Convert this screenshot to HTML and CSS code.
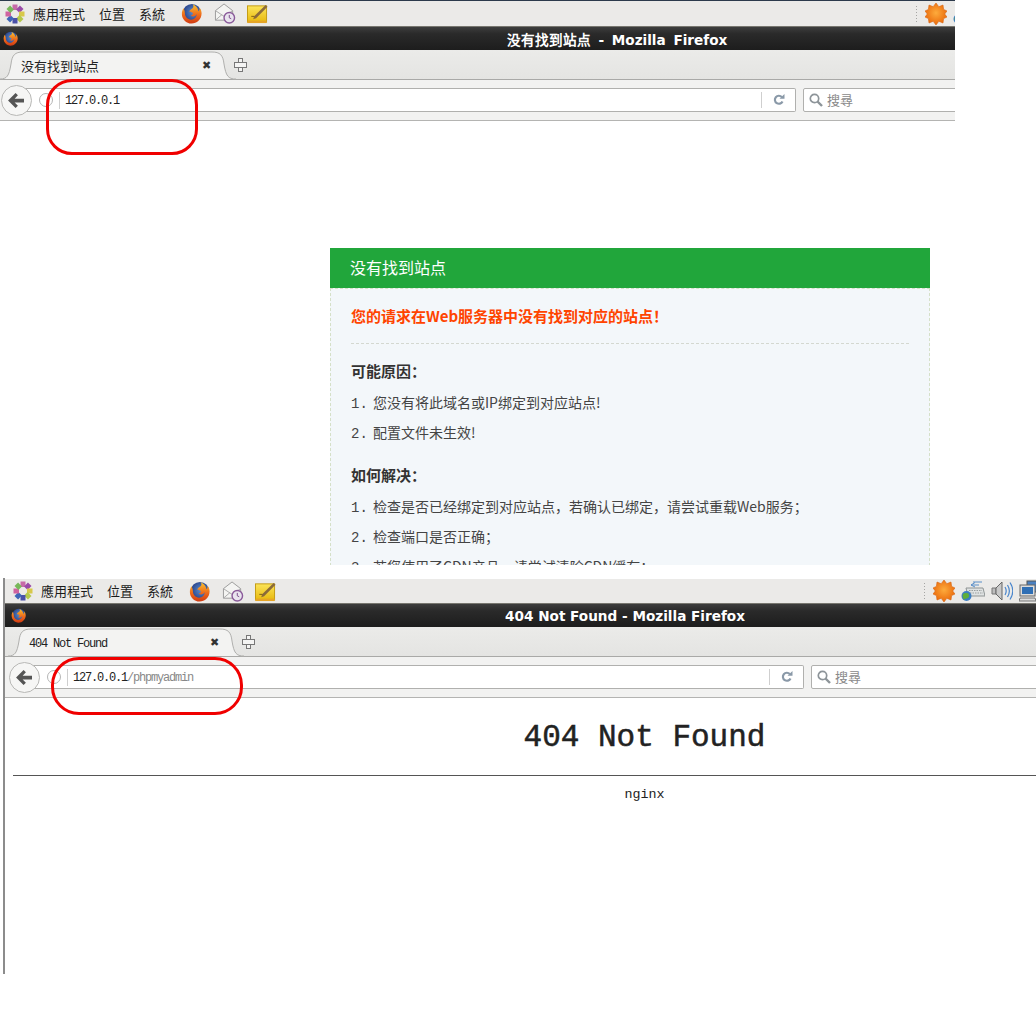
FILE: index.html
```html
<!DOCTYPE html>
<html lang="zh-CN">
<head>
    <meta charset="UTF-8">
    <title>127.0.0.1 / phpmyadmin</title>
    <link rel="stylesheet" href="styles.css">
</head>
<body>
    <svg class="defs" width="0" height="0">
        <defs>
            <radialGradient id="globe" cx="55%" cy="45%" r="60%"><stop offset="0" stop-color="#5b8fd0"/><stop offset="1" stop-color="#23387f"/></radialGradient>
            <linearGradient id="fox" x1="0" y1="0" x2="0" y2="1"><stop offset="0" stop-color="#f9c22e"/><stop offset=".55" stop-color="#ee6a1b"/><stop offset="1" stop-color="#cf3a12"/></linearGradient>
            <linearGradient id="noteFill" x1="0" y1="0" x2="0" y2="1"><stop offset="0" stop-color="#fbe45a"/><stop offset="1" stop-color="#e8b90e"/></linearGradient>
            <radialGradient id="sunFill" cx="50%" cy="45%" r="55%"><stop offset="0" stop-color="#fdab3c"/><stop offset="1" stop-color="#ea6a0c"/></radialGradient>
            <symbol id="i-logo" viewBox="0 0 20 20">
                <rect x="7.500" y="0.500" width="5" height="5.500" fill="#c76aa8"/>
                <rect x="7.500" y="0.500" width="5" height="5.500" fill="#9a4aa8" transform="rotate(45 10 10)"/>
                <rect x="7.500" y="0.500" width="5" height="5.500" fill="#d8c84a" transform="rotate(90 10 10)"/>
                <rect x="7.500" y="0.500" width="5" height="5.500" fill="#b4c84a" transform="rotate(135 10 10)"/>
                <rect x="7.500" y="0.500" width="5" height="5.500" fill="#4a50a8" transform="rotate(180 10 10)"/>
                <rect x="7.500" y="0.500" width="5" height="5.500" fill="#3f66b8" transform="rotate(225 10 10)"/>
                <rect x="7.500" y="0.500" width="5" height="5.500" fill="#cf62a0" transform="rotate(270 10 10)"/>
                <rect x="7.500" y="0.500" width="5" height="5.500" fill="#78b85a" transform="rotate(315 10 10)"/>
                <circle cx="10" cy="10" r="2.400" fill="#eeeae6"/>
            </symbol>
            <symbol id="i-firefox" viewBox="0 0 24 24">
                <circle cx="12.500" cy="11.500" r="10.500" fill="url(#globe)"/>
                <path d="M3 6C1.500 8 1 10 1 12.500 1 18.500 6 23.500 12 23.500S23.500 18.500 23.500 12C23.500 9 22.500 6.500 21 5 21.500 7 21 8.500 20 9.500 19.500 6 17 3 13.500 1.500 15 4 14 5.500 12.500 6.500 11 7.500 9.500 8.500 9.500 10 11 9.800 12.500 10.500 13.500 11.500 14 13 12.500 14 11 14.500 14 16.500 17 15 18 12.500 18 16 15 19 11.500 19 7.500 19 4.500 15.500 4.500 12 4.500 10 4 8 3 6Z" fill="url(#fox)"/>
            </symbol>
            <symbol id="i-mail" viewBox="0 0 22 22">
                <path d="M1 8 10 1l9 7v10H1Z" fill="#f4f4f2" stroke="#9a9a9a"/>
                <path d="M1 8l9 6 9-6M1 18l7-6M19 18l-7-6" fill="none" stroke="#a8a8a8"/>
                <circle cx="15.500" cy="15.500" r="5.500" fill="#e9e4ee" stroke="#8a5a9a" stroke-width="1.500"/>
                <path d="M15.500 12.500v3l2 1" fill="none" stroke="#7a4a8a"/>
            </symbol>
            <symbol id="i-note" viewBox="0 0 23 22">
                <rect x="1" y="3" width="20" height="17" fill="url(#noteFill)" stroke="#c39a10"/>
                <rect x="1" y="18.500" width="20" height="2.500" fill="#e6a526"/>
                <path d="M8 14 20 2l2 2L10 16l-3 1Z" fill="#8a6a3a"/>
                <path d="M5 14h3" stroke="#7a6010"/>
            </symbol>
            <symbol id="i-sun" viewBox="0 0 22 22">
                <path d="M11 0l2.800 3.700L18 2l.6 4.400L22 8l-2.300 3L22 14l-3.400 1.600L18 20l-4.200-1.700L11 22l-2.800-3.700L4 20l-.6-4.400L0 14l2.300-3L0 8l3.400-1.600L4 2l4.200 1.700Z" fill="url(#sunFill)" stroke="#d9650f" stroke-width=".6"/>
            </symbol>
            <symbol id="i-keyboard" viewBox="0 0 24 22">
                <path d="M5 8h17l2 8H7Z" fill="#dfe2e2" stroke="#8f9494"/>
                <path d="M8 10.500h13M9 13h13" stroke="#9a9f9f" stroke-dasharray="1.500 1"/>
                <path d="M10 5h8M14 2.500 10 5l4 2" fill="none" stroke="#5a8fc8"/>
                <path d="M12 2h9" stroke="#5a8fc8"/>
                <circle cx="5.500" cy="16" r="5" fill="#3c7ec4"/>
                <path d="M2 14c2-2 4 0 5-1 1 2 2 3 0 5-2 1-3 0-4 2-1-2-2-4-1-6Z" fill="#5fae3a"/>
            </symbol>
            <symbol id="i-speaker" viewBox="0 0 22 22">
                <path d="M1 8h4v6H1Z" fill="#bdbdbd" stroke="#777"/>
                <path d="M5 8l6-6v18l-6-6Z" fill="#c9c9c9" stroke="#666"/>
                <path d="M14 7c1.500 2.500 1.500 5.500 0 8M16.500 5c2.300 3.700 2.300 8.300 0 12M19 2.500c3.500 5.300 3.500 11.700 0 17" fill="none" stroke="#4a86cc" stroke-width="1.200"/>
            </symbol>
            <symbol id="i-computer" viewBox="0 0 24 22">
                <rect x="8" y="1" width="14" height="11" fill="#4a80c0" stroke="#555"/>
                <rect x="1" y="5" width="15" height="11" fill="#dcdcdc" stroke="#666"/>
                <rect x="3" y="7" width="11" height="7" fill="#2f6fb5"/>
                <path d="M1 18h15l1 3H0Z" fill="#dcdcdc" stroke="#777"/>
            </symbol>
            <symbol id="i-back" viewBox="0 0 18 16">
                <path d="M8 0 0 8l8 8 2.500-2.500L7 10h10V6H7l3.500-3.500Z" fill="#555"/>
            </symbol>
            <symbol id="i-reload" viewBox="0 0 12 12">
                <path d="M9.500 7.500A4 4 0 1 1 8.800 3" fill="none" stroke="#8a99a8" stroke-width="2.200"/>
                <path d="M6.500 4.800h5V0Z" fill="#8a99a8"/>
            </symbol>
            <symbol id="i-search" viewBox="0 0 14 14">
                <circle cx="5.500" cy="5.500" r="4.200" fill="none" stroke="#8d9499" stroke-width="1.700"/>
                <path d="m8.500 8.500 4.500 4.500" stroke="#8d9499" stroke-width="2.400"/>
            </symbol>
        </defs>
    </svg>

    <div class="shot shot-first">
        <div class="panel">
            <svg class="logo"><use href="#i-logo"/></svg>
            <span class="menu">應用程式</span>
            <span class="menu">位置</span>
            <span class="menu">系統</span>
            <svg class="launch launch-ff"><use href="#i-firefox"/></svg>
            <svg class="launch launch-mail"><use href="#i-mail"/></svg>
            <svg class="launch launch-note"><use href="#i-note"/></svg>
            <div class="tray">
                <span class="handle"></span>
                <svg class="tray-icon"><use href="#i-sun"/></svg>
                <svg class="tray-icon tray-key"><use href="#i-keyboard"/></svg>
            </div>
        </div>
        <div class="titlebar">
            <svg class="title-icon"><use href="#i-firefox"/></svg>
            <div class="title title-wide">没有找到站点 - Mozilla Firefox</div>
        </div>
        <div class="tabs">
            <div class="tab">
                <svg class="tab-shape" viewBox="0 0 236 30"><path d="M0 29C7 29 9 26 11 14 12 5 15 2 23 2H212C220 2 223 5 224 14 226 26 228 29 236 29" fill="#f3f3f2" stroke="#b0b0ae"/></svg>
                <span class="tab-label">没有找到站点</span>
                <span class="tab-close">✖</span>
            </div>
            <span class="tab-new"></span>
        </div>
        <div class="nav">
            <div class="back"><svg class="back-arrow"><use href="#i-back"/></svg></div>
            <div class="urlbar">
                <span class="info"></span>
                <span class="url"><b>127.0.0.1</b></span>
                <span class="reload"><svg class="reload-icon"><use href="#i-reload"/></svg></span>
            </div>
            <div class="search">
                <svg class="search-icon"><use href="#i-search"/></svg>
                <span class="search-text">搜尋</span>
            </div>
        </div>
        <div class="page">
            <div class="card">
                <div class="card-head">没有找到站点</div>
                <div class="card-body">
                    <p class="lead">您的请求在Web服务器中没有找到对应的站点！</p>
                    <h4>可能原因：</h4>
                    <ol>
                        <li>您没有将此域名或IP绑定到对应站点!</li>
                        <li>配置文件未生效!</li>
                    </ol>
                    <h4>如何解决：</h4>
                    <ol>
                        <li>检查是否已经绑定到对应站点，若确认已绑定，请尝试重载Web服务；</li>
                        <li>检查端口是否正确；</li>
                        <li>若您使用了CDN产品，请尝试清除CDN缓存；</li>
                    </ol>
                </div>
            </div>
        </div>
        <div class="ring ring-first"></div>
    </div>

    <div class="shot shot-second">
        <div class="panel">
            <svg class="logo"><use href="#i-logo"/></svg>
            <span class="menu">應用程式</span>
            <span class="menu">位置</span>
            <span class="menu">系統</span>
            <svg class="launch launch-ff"><use href="#i-firefox"/></svg>
            <svg class="launch launch-mail"><use href="#i-mail"/></svg>
            <svg class="launch launch-note"><use href="#i-note"/></svg>
            <div class="tray">
                <span class="handle"></span>
                <svg class="tray-icon"><use href="#i-sun"/></svg>
                <svg class="tray-icon tray-key"><use href="#i-keyboard"/></svg>
                <svg class="tray-icon tray-sound"><use href="#i-speaker"/></svg>
                <svg class="tray-icon tray-net"><use href="#i-computer"/></svg>
            </div>
        </div>
        <div class="titlebar">
            <svg class="title-icon"><use href="#i-firefox"/></svg>
            <div class="title">404 Not Found - Mozilla Firefox</div>
        </div>
        <div class="tabs">
            <div class="tab">
                <svg class="tab-shape" viewBox="0 0 236 30"><path d="M0 29C7 29 9 26 11 14 12 5 15 2 23 2H212C220 2 223 5 224 14 226 26 228 29 236 29" fill="#f3f3f2" stroke="#b0b0ae"/></svg>
                <span class="tab-label tab-mono">404 Not Found</span>
                <span class="tab-close">✖</span>
            </div>
            <span class="tab-new"></span>
        </div>
        <div class="nav">
            <div class="back"><svg class="back-arrow"><use href="#i-back"/></svg></div>
            <div class="urlbar">
                <span class="info"></span>
                <span class="url"><b>127.0.0.1</b>/phpmyadmin</span>
                <span class="reload"><svg class="reload-icon"><use href="#i-reload"/></svg></span>
            </div>
            <div class="search">
                <svg class="search-icon"><use href="#i-search"/></svg>
                <span class="search-text">搜尋</span>
            </div>
        </div>
        <div class="page page-404">
            <h1>404 Not Found</h1>
            <hr>
            <center>nginx</center>
        </div>
        <div class="ring ring-second"></div>
    </div>
</body>
</html>
```
FILE: styles.css
```css
body {
    margin: 0;
    background: #ffffff;
    font-family: "Noto Sans CJK SC", "Liberation Sans", sans-serif;
    overflow: hidden;
}
.defs {
    position: absolute;
}

.shot {
    position: relative;
    overflow: hidden;
    box-sizing: border-box;
}
.shot-first {
    width: 955px;
    height: 565px;
    --inset: 0px;
}
.shot-second {
    width: 1033px;
    height: 396px;
    margin: 13px 0 0 3px;
    padding-top: 1px;
    border-left: 2px solid #8c8c8c;
    --inset: 3px;
}

.panel {
    display: flex;
    align-items: center;
    height: 26px;
    padding-left: var(--inset);
    background: #ebeae8;
    border-bottom: 1px solid #77766f;
    font-family: "Noto Sans CJK TC", sans-serif;
    font-size: 13px;
    color: #1a1a1a;
}
.shot-first .panel {
    border-top: 1px solid #2c3a4c;
    height: 25px;
}
.shot-second .panel {
    height: 24px;
}
.shot-second .menu {
    padding-bottom: 2px;
}
.logo {
    flex-shrink: 0;
    width: 20px;
    height: 20px;
    margin: 0 8px 0 5px;
}
.menu {
    flex-shrink: 0;
    margin-right: 14px;
    white-space: nowrap;
}
.launch {
    flex-shrink: 0;
    height: 21px;
}
.launch-ff {
    width: 21px;
    margin-left: 2px;
}
.launch-mail {
    width: 22px;
    margin-left: 12px;
}
.launch-note {
    width: 23px;
    margin-left: 10px;
}
.tray {
    display: flex;
    align-items: center;
    flex-shrink: 0;
    margin-left: 646px;
}
.handle {
    flex-shrink: 0;
    width: 3px;
    height: 18px;
    margin-right: 7px;
    background: radial-gradient(circle, #a5a5a3 40%, transparent 45%) 0 0 / 3px 3px;
}
.tray-icon {
    flex-shrink: 0;
    width: 22px;
    height: 22px;
}
.tray-key {
    width: 24px;
    margin-left: 6px;
}
.tray-sound {
    margin-left: 6px;
}
.tray-net {
    width: 24px;
    margin-left: 6px;
}

.titlebar {
    display: flex;
    align-items: center;
    height: 23px;
    padding-left: var(--inset);
    background: linear-gradient(#3d3d3d, #2a2a2a 30%, #1d1d1d);
    color: #ffffff;
    font-family: "DejaVu Sans", sans-serif;
    font-size: 13.6px;
    font-weight: bold;
    white-space: nowrap;
}
.title-icon {
    flex-shrink: 0;
    width: 15px;
    height: 15px;
    margin-left: 3px;
}
.title {
    flex-shrink: 0;
    width: 1234px;
    margin-left: -18px;
    text-align: center;
}
.title-wide {
    word-spacing: 3px;
}

.tabs {
    display: flex;
    align-items: center;
    height: 29px;
    padding-left: var(--inset);
    background: linear-gradient(#ebebe9, #e4e4e2);
    border-bottom: 1px solid #a9a9a7;
}
.tab {
    position: relative;
    display: flex;
    align-items: center;
    flex-shrink: 0;
    width: 236px;
    height: 30px;
    margin-bottom: -1px;
    font-size: 13px;
    color: #222222;
}
.tab-shape {
    position: absolute;
    left: 0;
    top: 0;
    width: 236px;
    height: 30px;
}
.tab-label {
    position: relative;
    margin-left: 21px;
}
.tab-mono {
    padding-top: 3px;
    font-family: "Liberation Mono", monospace;
    font-size: 12px;
    letter-spacing: -1.2px;
}
.tab-close {
    position: absolute;
    left: 202px;
    top: 9px;
    font-family: "DejaVu Sans", sans-serif;
    font-size: 11px;
    color: #333333;
}
.tab-new {
    position: relative;
    box-sizing: border-box;
    width: 5px;
    height: 14px;
    margin-left: 2px;
    background: #f4f4f3;
    border: 1px solid #777777;
}
.tab-new::after {
    content: "";
    position: absolute;
    left: -5px;
    top: 3px;
    box-sizing: border-box;
    width: 13px;
    height: 6px;
    background: #f4f4f3;
    border: 1px solid #777777;
}

.nav {
    position: relative;
    display: flex;
    align-items: center;
    height: 40px;
    padding-left: var(--inset);
    background: #f2f2f1;
    border-bottom: 1px solid #b4b4b2;
    font-size: 13px;
}
.back {
    position: relative;
    z-index: 1;
    display: flex;
    align-items: center;
    justify-content: center;
    flex-shrink: 0;
    box-sizing: border-box;
    width: 31px;
    height: 31px;
    margin-left: 1px;
    background: #f6f6f5;
    border: 1px solid #b8b8b6;
    border-radius: 50%;
}
.back-arrow {
    width: 17px;
    height: 15px;
}
.urlbar {
    display: flex;
    align-items: center;
    flex-shrink: 0;
    box-sizing: border-box;
    width: 772px;
    height: 24px;
    margin-left: -8px;
    padding-left: 15px;
    background: #ffffff;
    border: 1px solid #b0b0ae;
    border-left: none;
    border-radius: 0 2px 2px 0;
}
.info {
    flex-shrink: 0;
    box-sizing: border-box;
    width: 14px;
    height: 14px;
    border: 1px solid #b5b5b5;
    border-radius: 50%;
}
.url {
    flex: 1;
    margin-left: 6px;
    padding-left: 5px;
    padding-top: 1px;
    border-left: 1px solid #cfcfcf;
    font-family: "Liberation Mono", monospace;
    font-size: 12px;
    letter-spacing: -1.2px;
    line-height: 16px;
    color: #888888;
}
.url b {
    font-weight: normal;
    color: #222222;
}
.reload {
    display: flex;
    align-items: center;
    justify-content: center;
    width: 33px;
    height: 16px;
    border-left: 1px solid #cfcfcf;
}
.reload-icon {
    width: 12px;
    height: 12px;
}
.search {
    display: flex;
    align-items: center;
    flex-shrink: 0;
    gap: 4px;
    box-sizing: border-box;
    width: 400px;
    height: 24px;
    margin-left: 7px;
    padding-left: 5px;
    background: #ffffff;
    border: 1px solid #b0b0ae;
    border-radius: 2px;
    color: #8a8a8a;
}
.search-icon {
    flex-shrink: 0;
    width: 14px;
    height: 14px;
}
.search-text {
    padding-bottom: 2px;
}

.page {
    height: 400px;
}
.card {
    width: 600px;
    margin: 127px 0 0 330px;
}
.card-head {
    height: 40px;
    padding-left: 20px;
    background: #21a63b;
    color: #ffffff;
    font-size: 16px;
    line-height: 38px;
}
.card-body {
    padding: 14px 20px 20px;
    background: #f3f7fa;
    border: 1px dashed #d5e0c8;
    font-size: 14px;
    color: #444444;
}
.lead {
    margin: 0 0 13px;
    padding-bottom: 14px;
    border-bottom: 1px dashed #d4d8d0;
    font-size: 15px;
    font-weight: bold;
    line-height: 26px;
    color: #ff4400;
}
h4 {
    margin: 0 0 2px;
    font-size: 15px;
    line-height: 28px;
    color: #333333;
}
ol {
    margin: 0 0 14px;
    padding: 0;
    list-style: none;
    counter-reset: step;
}
li {
    display: flex;
    align-items: baseline;
    height: 30px;
    line-height: 30px;
    counter-increment: step;
}
li::before {
    content: counter(step) ".";
    flex-shrink: 0;
    width: 22px;
    font-family: "Liberation Mono", monospace;
}

.page-404 {
    width: 1263px;
    padding: 0 0 0 8px;
    font-family: "Liberation Mono", monospace;
    color: #222222;
}
h1 {
    margin: 22px 0 19px;
    font-size: 31px;
    font-weight: normal;
    line-height: 36px;
    text-align: center;
    -webkit-text-stroke: 0.5px #222222;
}
hr {
    margin: 0 0 9px;
    border: none;
    border-top: 1px solid #555555;
}
center {
    font-size: 13.33px;
    line-height: 20px;
}

.ring {
    position: absolute;
    box-sizing: border-box;
    border: 3px solid #f00000;
}
.ring-first {
    left: 46px;
    top: 79px;
    width: 152px;
    height: 76px;
    border-radius: 26px;
}
.ring-second {
    left: 46px;
    top: 79px;
    width: 192px;
    height: 58px;
    border-radius: 28px;
}
```
